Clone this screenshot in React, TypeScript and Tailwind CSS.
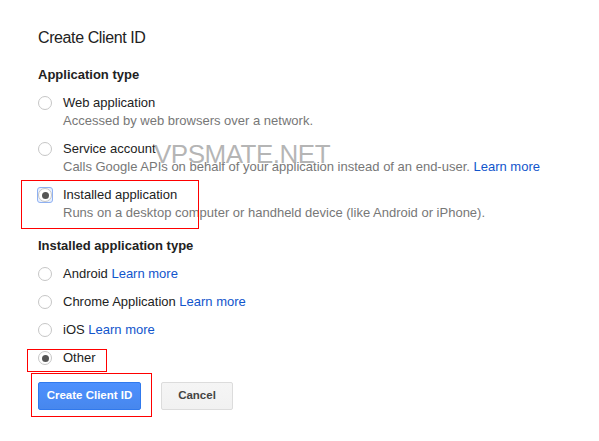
import { ReactNode } from 'react';

type Option = {
    label: string;
    desc?: ReactNode;
    link?: boolean;
};

const APP_TYPES: Option[] = [
    { label: 'Web application', desc: 'Accessed by web browsers over a network.' },
    {
        label: 'Service account',
        desc: (
            <>
                Calls Google APIs on behalf of your application instead of an end-user.{' '}
                <a className="text-[#15c]">Learn more</a>
            </>
        ),
    },
    { label: 'Installed application', desc: 'Runs on a desktop computer or handheld device (like Android or iPhone).' },
];

const INSTALLED_TYPES: Option[] = [
    { label: 'Android', link: true },
    { label: 'Chrome Application', link: true },
    { label: 'iOS', link: true },
    { label: 'Other' },
];

function Radio({ checked = false, focused = false }: { checked?: boolean; focused?: boolean }) {
    const circle = (
        <span className="flex h-[14px] w-[14px] items-center justify-center rounded-full border border-[#c6c6c6] bg-white">
            {checked && <span className="h-[7px] w-[7px] rounded-full bg-[#555]"></span>}
        </span>
    );
    if (focused) {
        return (
            <span className="-ml-px -mr-px flex h-[16px] w-[16px] shrink-0 items-center justify-center rounded-[3px] border border-[#8fb1f2] bg-[#e8f0fe]">
                {circle}
            </span>
        );
    }
    return <span className="flex w-[14px] shrink-0">{circle}</span>;
}

function RedBox({ className }: { className: string }) {
    return <span className={`pointer-events-none absolute border border-[#ff0000] ${className}`}></span>;
}

export default function App() {
    return (
        <div className="relative min-h-[441px] w-[599px] bg-white pl-[38px] pt-[28px] font-['Liberation_Sans',Arial,sans-serif] text-[13px] text-[#222]">
            <h1 className="text-[16px] leading-[20px] tracking-[-0.4px] text-[#222]">Create Client ID</h1>

            <h2 className="mt-[18px] text-[13px] font-bold leading-[18px]">Application type</h2>
            <div className="mt-[10px] flex flex-col gap-[10px]">
                {APP_TYPES.map((opt, i) => {
                    const selected = i === 2;
                    return (
                        <div key={opt.label} className="relative">
                            {selected && <RedBox className="-left-[17px] -top-[6px] h-[49px] w-[178px]" />}
                            <div className="flex items-center gap-[11px] leading-[18px]">
                                <Radio checked={selected} focused={selected} />
                                <span>{opt.label}</span>
                            </div>
                            <div className="pl-[25px] leading-[18px] text-[#777]">{opt.desc}</div>
                        </div>
                    );
                })}
            </div>

            <h2 className="mt-[15px] text-[13px] font-bold leading-[18px]">Installed application type</h2>
            <div className="mt-[10px] flex flex-col gap-[10px]">
                {INSTALLED_TYPES.map((opt) => {
                    const selected = opt.label === 'Other';
                    return (
                        <div key={opt.label} className="relative flex items-center gap-[11px] leading-[18px]">
                            {selected && <RedBox className="-left-[11px] top-0 h-[23px] w-[80px]" />}
                            <Radio checked={selected} />
                            <span>
                                {opt.label}
                                {opt.link && <a className="text-[#15c]"> Learn more</a>}
                            </span>
                        </div>
                    );
                })}
            </div>

            <div className="relative mt-[15px] flex gap-[20px]">
                <RedBox className="-left-[7px] -top-[9px] h-[44px] w-[121px]" />
                <button className="h-[28px] w-[103px] rounded-[2px] border border-[#3079ed] bg-gradient-to-b from-[#4d90fe] to-[#4787ed] text-[11.5px] font-bold text-white">
                    Create Client ID
                </button>
                <button className="h-[28px] w-[72px] rounded-[2px] border border-[#dcdcdc] bg-gradient-to-b from-[#f5f5f5] to-[#f1f1f1] text-[11.5px] font-bold text-[#444]">
                    Cancel
                </button>
            </div>

            <span className="pointer-events-none absolute left-[154px] top-[139px] text-[26px] leading-[30px] tracking-[-0.5px] text-[#a8a8a8]/85">
                VPSMATE.NET
            </span>
        </div>
    );
}
